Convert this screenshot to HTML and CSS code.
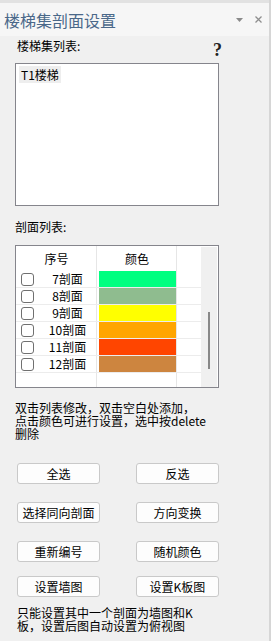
FILE: index.html
```html
<!DOCTYPE html>
<html lang="zh-CN">
<head>
  <meta charset="UTF-8">
  <meta name="viewport" content="width=device-width, initial-scale=1.0">
  <title>楼梯集剖面设置</title>
  <link rel="stylesheet" href="styles.css">
</head>
<body>
  <div class="panel">
    <div class="top-strip"></div>
    <div class="titlebar">
      <span class="title">楼梯集剖面设置</span>
      <svg class="icon-menu" width="7" height="4" viewBox="0 0 7 4"><path d="M0 0h7L3.5 4z" fill="#8a8a8a"/></svg>
      <svg class="icon-close" width="7" height="7" viewBox="0 0 7 7"><path d="M0.5 0.5l6 6M6.5 0.5l-6 6" stroke="#8e8e8e" stroke-width="1.3"/></svg>
    </div>

    <div class="content">
      <div class="list-head">
        <span class="label-stair">楼梯集列表:</span>
        <span class="help">?</span>
      </div>
      <div class="list-box">
        <div class="list-item">T1楼梯</div>
      </div>

      <div class="sub-head">剖面列表:</div>
      <div class="table-box">
        <div class="grid-area">
          <div class="head-row">
            <div>序号</div>
            <div>颜色</div>
            <div></div>
          </div>
          <div class="row">
            <div class="cell-name"><span class="check"></span><span class="name">7剖面</span></div>
            <div class="cell-color"><span class="swatch" style="background:#00ff80"></span></div>
            <div></div>
          </div>
          <div class="row">
            <div class="cell-name"><span class="check"></span><span class="name">8剖面</span></div>
            <div class="cell-color"><span class="swatch" style="background:#8fbc8f"></span></div>
            <div></div>
          </div>
          <div class="row">
            <div class="cell-name"><span class="check"></span><span class="name">9剖面</span></div>
            <div class="cell-color"><span class="swatch" style="background:#ffff00"></span></div>
            <div></div>
          </div>
          <div class="row">
            <div class="cell-name"><span class="check"></span><span class="name">10剖面</span></div>
            <div class="cell-color"><span class="swatch" style="background:#ffa500"></span></div>
            <div></div>
          </div>
          <div class="row">
            <div class="cell-name"><span class="check"></span><span class="name">11剖面</span></div>
            <div class="cell-color"><span class="swatch" style="background:#ff4500"></span></div>
            <div></div>
          </div>
          <div class="row">
            <div class="cell-name"><span class="check"></span><span class="name">12剖面</span></div>
            <div class="cell-color"><span class="swatch" style="background:#cd853f"></span></div>
            <div></div>
          </div>
        </div>
        <div class="scroll">
          <div class="thumb"></div>
        </div>
      </div>

      <p class="hint">双击列表修改，双击空白处添加，<br>点击颜色可进行设置，选中按delete<br>删除</p>

      <div class="btn-row">
        <button class="btn">全选</button>
        <button class="btn">反选</button>
      </div>
      <div class="btn-row">
        <button class="btn">选择同向剖面</button>
        <button class="btn">方向变换</button>
      </div>
      <div class="btn-row">
        <button class="btn">重新编号</button>
        <button class="btn">随机颜色</button>
      </div>
      <div class="btn-row last">
        <button class="btn">设置墙图</button>
        <button class="btn">设置K板图</button>
      </div>

      <p class="note">只能设置其中一个剖面为墙图和K<br>板，设置后图自动设置为俯视图</p>
    </div>
  </div>
</body>
</html>
```

FILE: styles.css
```css
body {
  margin: 0;
  background-color: #f0f0f0;
  font-family: "Noto Sans CJK SC", "Noto Sans", sans-serif;
  font-size: 12px;
  color: #000;
}

.panel {
  width: 271px;
  min-height: 641px;
  box-sizing: border-box;
  border-right: 2px solid #d6d6d6;
}

.top-strip {
  height: 3px;
  background-color: #e2e2e2;
}

.titlebar {
  height: 33px;
  display: flex;
  align-items: center;
  padding: 0 7px 0 4px;
  background-color: #f6f6f6;
}

.title {
  flex: 1;
  font-size: 16px;
  line-height: 20px;
  color: #4a6889;
}

.icon-close {
  margin-left: 12px;
}

.content {
  padding-left: 15px;
}

/* stair list */
.list-head {
  display: flex;
  width: 207px;
  height: 24px;
  margin-top: 3px;
  line-height: 14px;
}

.label-stair {
  padding-left: 2px;
  flex: 1;
}

.help {
  font-family: "Liberation Serif", serif;
  font-weight: bold;
  font-size: 18px;
  line-height: 18px;
  margin-top: 2px;
  color: #222;
}

.list-box {
  width: 204px;
  height: 143px;
  box-sizing: border-box;
  border: 1px solid #85858c;
  background-color: #fff;
  padding: 2px 0 0 3px;
}

.list-item {
  display: inline-block;
  height: 17px;
  line-height: 17px;
  padding: 0 2px;
  background-color: #eeeeee;
}

/* section table */
.sub-head {
  margin-top: 14px;
  line-height: 14px;
}

.table-box {
  display: flex;
  width: 204px;
  height: 143px;
  box-sizing: border-box;
  margin-top: 11px;
  border: 1px solid #85858c;
  background-color: #fff;
}

.grid-area {
  width: 185px;
  background-image:
    linear-gradient(#e6e6e6, #e6e6e6),
    linear-gradient(#e6e6e6, #e6e6e6);
  background-size: 1px 100%, 1px 100%;
  background-position: 80px 0, 160px 0;
  background-repeat: no-repeat;
}

.head-row,
.row {
  display: grid;
  grid-template-columns: 81px 80px 24px;
}

.head-row {
  height: 25px;
  line-height: 25px;
  text-align: center;
}

.row {
  height: 17px;
  box-sizing: border-box;
  border-bottom: 1px solid #ececec;
}

.cell-name {
  display: flex;
  align-items: center;
}

.check {
  width: 11px;
  height: 11px;
  margin-left: 5px;
  border: 1px solid #707070;
  border-radius: 3px;
  background-color: #fff;
}

.name {
  flex: 1;
  padding-left: 4px;
  text-align: center;
  line-height: 16px;
}

.cell-color {
  display: flex;
}

.swatch {
  width: 77px;
  height: 16px;
  margin-left: 2px;
}

.scroll {
  width: 16px;
  margin: 1px 1px 0 0;
  background-color: #f0f0f0;
}

.thumb {
  width: 2px;
  height: 57px;
  margin: 65px 0 0 7px;
  background-color: #888;
}

/* texts and buttons */
.hint {
  margin: 13px 0 0;
  line-height: 13px;
}

.btn-row {
  display: grid;
  grid-template-columns: 83px 83px;
  column-gap: 36px;
  margin: 23px 0 0 2px;
}

.btn-row + .btn-row {
  margin-top: 18px;
}

.btn-row.last {
  margin-top: 14px;
}

.btn {
  height: 21px;
  padding: 0;
  border: 1px solid #c9c9c9;
  border-radius: 3px;
  background-color: #fdfdfd;
  font-family: inherit;
  font-size: 12px;
  line-height: 19px;
  color: #000;
}

.note {
  margin: 9px 0 0 2px;
  line-height: 13px;
}
```
